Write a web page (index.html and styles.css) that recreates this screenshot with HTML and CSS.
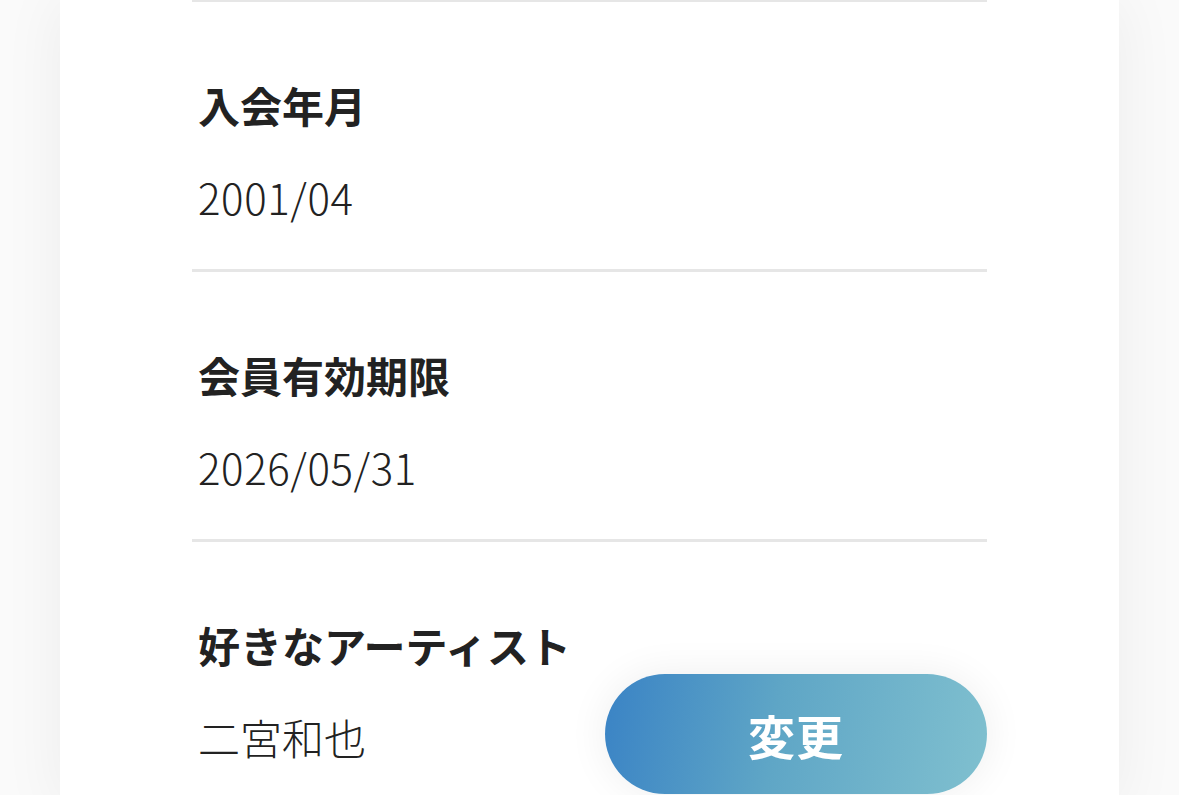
FILE: index.html
```html
<!DOCTYPE html>
<html lang="ja">
<head>
  <meta charset="UTF-8">
  <meta name="viewport" content="width=device-width, initial-scale=1.0">
  <title>会員情報</title>
  <link rel="stylesheet" href="styles.css">
</head>
<body>

<div class="card">
  <div class="info-row">
    <div class="info-label">入会年月</div>
    <div class="info-value date">2001/04</div>
  </div>
  <div class="info-row">
    <div class="info-label">会員有効期限</div>
    <div class="info-value date">2026/05/31</div>
  </div>
  <div class="info-row">
    <div class="info-label">好きなアーティスト</div>
    <div class="info-value">二宮和也</div>
  </div>
</div>

<!-- Fixed change button -->
<button class="change-button" type="button">変更</button>

</body>
</html>
```

FILE: styles.css
```css
html, body {
  height: 100%;
  overflow: hidden;
}

body {
  margin: 0;
  padding: 0;
  background-color: #fafafa;
  font-family: "Noto Sans CJK JP", "Noto Sans", sans-serif;
  color: #222;
}

.card {
  width: 795px;
  min-height: 100%;
  margin: -1px 0 0 60px;
  padding: 0 132px;
  background-color: #fff;
  box-shadow: 0 0 60px rgba(0, 0, 0, 0.06);
}

.info-row {
  border-top: 3px solid #e6e6e6;
  padding: 73px 6px 42px;
}

.info-label {
  font-size: 42px;
  font-weight: bold;
  line-height: 60px;
  margin-bottom: 32px;
}

.info-value {
  font-size: 42px;
  font-weight: 300;
  line-height: 60px;
}

.info-value.date {
  letter-spacing: 0.6px;
}

.change-button {
  position: fixed;
  left: 605px;
  top: 674px;
  width: 382px;
  height: 120px;
  border: none;
  border-radius: 60px;
  background: linear-gradient(100deg, #3a83c5 0%, #5fa6c6 45%, #80c0cf 100%);
  color: #fff;
  font-family: "Noto Sans CJK JP", sans-serif;
  font-size: 47px;
  font-weight: bold;
  letter-spacing: 1px;
  box-shadow: 0 0 40px rgba(0, 0, 0, 0.07);
  cursor: pointer;
}
```
